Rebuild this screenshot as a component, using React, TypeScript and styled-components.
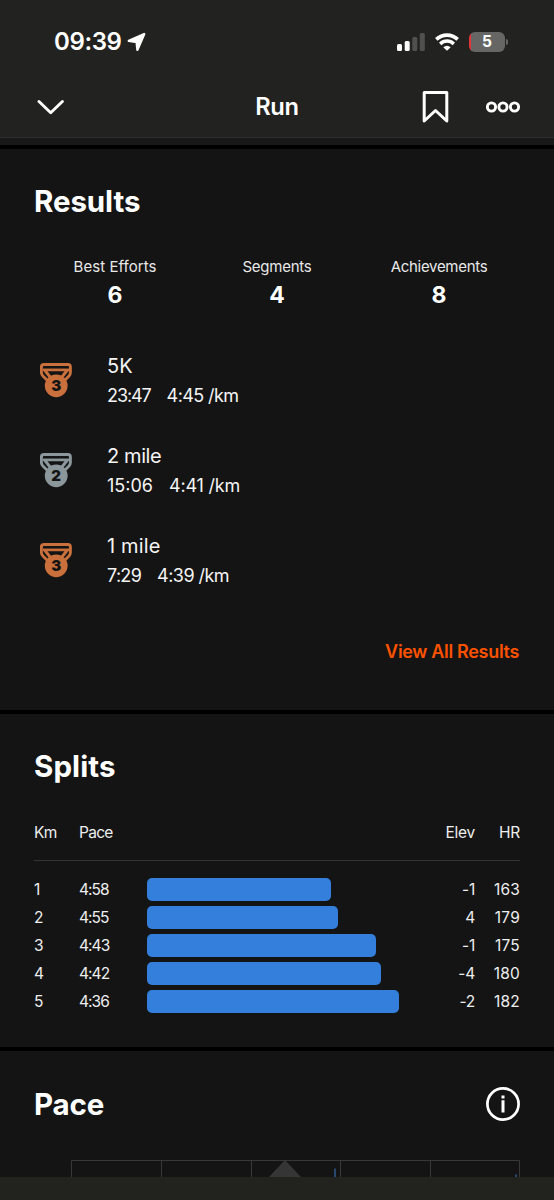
import React from "react";
import styled, { createGlobalStyle } from "styled-components";

const GlobalStyle = createGlobalStyle`
  * { box-sizing: border-box; }
  body { margin: 0; background: #000; }
`;

const Screen = styled.div`
  width: 554px;
  height: 1200px;
  overflow: hidden;
  display: flex;
  flex-direction: column;
  background: #000;
  color: #fff;
  font-family: Inter, "Liberation Sans", sans-serif;
`;

const Text = styled.span<{ $size: number; $weight?: number; $spacing?: number; $color?: string }>`
  display: block;
  white-space: nowrap;
  font-size: ${(p) => p.$size}px;
  font-weight: ${(p) => p.$weight ?? 400};
  letter-spacing: ${(p) => p.$spacing ?? 0}px;
  color: ${(p) => p.$color ?? "#fff"};
`;

const Header = styled.header`
  flex: none;
  height: 138px;
  background: #222220;
  border-bottom: 1px solid #2e2e2d;
`;

const StatusBar = styled.div`
  height: 76px;
  padding: 7px 46px 0 54px;
  display: flex;
  align-items: center;
  justify-content: space-between;
`;

const Cluster = styled.div<{ $gap: number }>`
  display: flex;
  align-items: center;
  gap: ${(p) => p.$gap}px;
`;

const Battery = styled.div`
  display: flex;
  align-items: center;
  gap: 1px;
`;

const BatteryBody = styled.div`
  width: 36px;
  height: 20px;
  border-radius: 6px;
  background: linear-gradient(90deg, #e5343a 0 2px, #666665 2px);
  display: flex;
  align-items: center;
  justify-content: center;
`;

const BatteryCap = styled.div`
  width: 2px;
  height: 6px;
  border-radius: 0 2px 2px 0;
  background: #666665;
`;

const NavBar = styled.div`
  height: 61px;
  padding: 0 34px 0 37px;
  display: grid;
  grid-template-columns: 1fr auto 1fr;
  align-items: center;
`;

const NavTitle = styled(Text)`
  padding-right: 3px;
`;

const NavActions = styled.div`
  display: flex;
  align-items: center;
  justify-content: flex-end;
  gap: 37px;
`;

const HeaderGap = styled.div`
  flex: none;
  height: 7px;
  background: #181818;
`;

const Section = styled.section<{ $height: number }>`
  flex: none;
  height: ${(p) => p.$height}px;
  margin-top: 4px;
  padding: 0 34px;
  background: #141414;
  overflow: hidden;
`;

const SectionHead = styled.div<{ $height: number }>`
  height: ${(p) => p.$height}px;
  display: flex;
  align-items: center;
  justify-content: space-between;
`;

const Stats = styled.div`
  display: grid;
  grid-template-columns: repeat(3, 1fr);
  height: 81px;
  margin-top: 2px;
  text-align: center;
`;

const Stat = styled.div`
  line-height: 23px;
`;

const StatValue = styled(Text)`
  line-height: 34px;
`;

const Effort = styled.div`
  height: 90px;
  display: grid;
  grid-template-columns: 73px 1fr;
  align-items: center;
`;

const MedalBox = styled.div`
  padding-left: 6px;
  height: 37px;
`;

const EffortText = styled.div`
  line-height: 30px;
`;

const ViewAll = styled.div`
  display: flex;
  justify-content: flex-end;
  line-height: 30px;
  margin-top: 31px;
  padding-right: 1px;
`;

const SplitRow = styled.div<{ $height: number }>`
  display: grid;
  grid-template-columns: 45px 68px 1fr 60px 45px;
  align-items: center;
  height: ${(p) => p.$height}px;
`;

const SplitHead = styled(SplitRow)`
  margin: -1px 0 14px;
  border-bottom: 1px solid #343434;
  padding-bottom: 13px;
`;

const RightCell = styled.div`
  display: flex;
  justify-content: flex-end;
`;

const Bar = styled.div`
  height: 23px;
  border-radius: 5px;
  background: #347fdc;
`;

const ChartBox = styled.div`
  padding-left: 37px;
  margin-top: 2px;
`;

const BottomBar = styled.footer`
  flex: none;
  height: 23px;
  background: #22221f;
`;

const Medal = ({ color, rank }: { color: string; rank: number }) => (
  <svg width="32" height="36" viewBox="0 0 32 36" fill="none">
    <path
      d="M4 1.5H28Q30.4 1.5 30.4 3.9V9.5Q30.4 11.6 29 13L24 18H8L2.9 13Q1.4 11.6 1.4 9.5V3.9Q1.4 1.5 4 1.5Z"
      stroke={color}
      strokeWidth="2.9"
      strokeLinejoin="round"
    />
    <path d="M3 6.9H29" stroke={color} strokeWidth="2.7" />
    <path d="M5 7.5L12 16.5M27 7.5L20 16.5" stroke={color} strokeWidth="3" />
    <circle cx="16.2" cy="22.8" r="11.4" fill={color} />
    <text
      x="16.2"
      y="28.2"
      textAnchor="middle"
      fontFamily="Inter, sans-serif"
      fontSize="15"
      fontWeight="900"
      fill="#141414"
    >
      {rank}
    </text>
  </svg>
);

const Signal = () => (
  <svg width="28" height="18" viewBox="0 0 28 18">
    <rect x="0" y="11" width="5" height="7" rx="1.5" fill="#fff" />
    <rect x="7.7" y="8" width="5" height="10" rx="1.5" fill="#fff" />
    <rect x="15.3" y="4" width="5" height="14" rx="1.5" fill="#50504f" />
    <rect x="22.8" y="0" width="5" height="18" rx="1.5" fill="#50504f" />
  </svg>
);

const Wifi = () => (
  <svg width="24" height="18" viewBox="0 0 24 18" fill="none" stroke="#fff">
    <path d="M1.3 6.4C7.3 .7 16.7 .7 22.7 6.4" strokeWidth="3.6" />
    <path d="M5.2 10.9C9.2 7.1 14.8 7.1 18.8 10.9" strokeWidth="3.4" />
    <path d="M12 17.8L8.3 14.2Q12 11.2 15.7 14.2Z" fill="#fff" stroke="none" />
  </svg>
);

const efforts = [
  { name: "5K", nameGap: 0, time: "23:47", timeGap: -1.1, pace: "4:45 /km", paceGap: -0.6, rank: 3, color: "#c9703c" },
  { name: "2 mile", nameGap: -0.4, time: "15:06", timeGap: 0, pace: "4:41 /km", paceGap: -0.2, rank: 2, color: "#8b979b" },
  { name: "1 mile", nameGap: 0.15, time: "7:29", timeGap: -0.7, pace: "4:39 /km", paceGap: -0.55, rank: 3, color: "#c9703c" },
];

const stats = [
  { label: "Best Efforts", spacing: 0.05, value: 6 },
  { label: "Segments", spacing: -0.25, value: 4 },
  { label: "Achievements", spacing: -0.3, value: 8 },
];

const splits = [
  { km: 1, pace: "4:58", bar: 184, elev: "-1", hr: 163 },
  { km: 2, pace: "4:55", bar: 191, elev: "4", hr: 179 },
  { km: 3, pace: "4:43", bar: 229, elev: "-1", hr: 175 },
  { km: 4, pace: "4:42", bar: 234, elev: "-4", hr: 180 },
  { km: 5, pace: "4:36", bar: 252, elev: "-2", hr: 182 },
];

const Cell = ({ children, spacing = -0.25 }: { children: React.ReactNode; spacing?: number }) => (
  <Text $size={15.5} $spacing={spacing} $color="#eee">
    {children}
  </Text>
);

export default function App() {
  return (
    <Screen>
      <GlobalStyle />
      <Header>
        <StatusBar>
          <Cluster $gap={6}>
            <Text $size={24} $weight={600} $spacing={-0.4}>
              09:39
            </Text>
            <svg width="19" height="20" viewBox="0 0 19 20">
              <path
                d="M17.2 2L1.8 8.9L9.6 10L10.4 17.8Z"
                fill="#fff"
                stroke="#fff"
                strokeWidth="2.4"
                strokeLinejoin="round"
              />
            </svg>
          </Cluster>
          <Cluster $gap={10}>
            <Signal />
            <Wifi />
            <Battery>
              <BatteryBody>
                <Text $size={15.5} $weight={700}>
                  5
                </Text>
              </BatteryBody>
              <BatteryCap />
            </Battery>
          </Cluster>
        </StatusBar>
        <NavBar>
          <svg width="28" height="16" viewBox="0 0 28 16" fill="none">
            <path d="M2 2.5L13.7 13.8L25.4 2.5" stroke="#fff" strokeWidth="2.9" strokeLinecap="round" strokeLinejoin="round" />
          </svg>
          <NavTitle $size={23.7} $weight={600} $spacing={-0.3}>
            Run
          </NavTitle>
          <NavActions>
            <svg width="27" height="32" viewBox="0 0 27 32" fill="none">
              <path d="M2.2 1.6H24.8V30L13.5 19.5L2.2 30Z" stroke="#fff" strokeWidth="3" strokeLinejoin="round" />
            </svg>
            <svg width="34" height="12" viewBox="0 0 34 12" fill="none" stroke="#fff" strokeWidth="2.9">
              <circle cx="5.5" cy="6" r="4.1" />
              <circle cx="17" cy="6" r="4.1" />
              <circle cx="28.5" cy="6" r="4.1" />
            </svg>
          </NavActions>
        </NavBar>
      </Header>
      <HeaderGap />

      <Section $height={561}>
        <SectionHead $height={104}>
          <Text $size={29.5} $weight={700} $spacing={-0.1}>
            Results
          </Text>
        </SectionHead>
        <Stats>
          {stats.map((s) => (
            <Stat key={s.label}>
              <Text $size={15} $spacing={s.spacing} $color="#e8e8e8">
                {s.label}
              </Text>
              <StatValue $size={23} $weight={700}>
                {s.value}
              </StatValue>
            </Stat>
          ))}
        </Stats>
        {efforts.map((e) => (
          <Effort key={e.name}>
            <MedalBox>
              <Medal color={e.color} rank={e.rank} />
            </MedalBox>
            <EffortText>
              <Text $size={20} $spacing={e.nameGap} $color="#f4f4f4">
                {e.name}
              </Text>
              <Cluster $gap={16}>
                <Text $size={18} $spacing={e.timeGap} $color="#f4f4f4">
                  {e.time}
                </Text>
                <Text $size={18} $spacing={e.paceGap} $color="#f4f4f4">
                  {e.pace}
                </Text>
              </Cluster>
            </EffortText>
          </Effort>
        ))}
        <ViewAll>
          <Text $size={18} $weight={600} $spacing={-0.32} $color="#fc5200">
            View All Results
          </Text>
        </ViewAll>
      </Section>

      <Section $height={333}>
        <SectionHead $height={104}>
          <Text $size={29.5} $weight={700} $spacing={0.1}>
            Splits
          </Text>
        </SectionHead>
        <SplitHead $height={44}>
          <Cell spacing={-0.7}>Km</Cell>
          <Cell spacing={-0.7}>Pace</Cell>
          <span />
          <RightCell>
            <Cell>Elev</Cell>
          </RightCell>
          <RightCell>
            <Cell>HR</Cell>
          </RightCell>
        </SplitHead>
        {splits.map((s) => (
          <SplitRow $height={28.2} key={s.km}>
            <Cell>{s.km}</Cell>
            <Cell spacing={-0.95}>{s.pace}</Cell>
            <Bar style={{ width: s.bar }} />
            <RightCell>
              <Cell>{s.elev}</Cell>
            </RightCell>
            <RightCell>
              <Cell spacing={0.2}>{s.hr}</Cell>
            </RightCell>
          </SplitRow>
        ))}
      </Section>

      <Section $height={126}>
        <SectionHead $height={106}>
          <Text $size={29.5} $weight={700} $spacing={-0.15}>
            Pace
          </Text>
          <svg width="34" height="34" viewBox="0 0 34 34" fill="none">
            <circle cx="17" cy="17" r="15.6" stroke="#fff" strokeWidth="2.7" />
            <path d="M17 13.3V25.5M17 8.5V11.5" stroke="#fff" strokeWidth="3" />
          </svg>
        </SectionHead>
        <ChartBox>
          <svg width="450" height="20" viewBox="0 0 450 20" fill="none">
            <path d="M214 1L230 18H198Z" fill="#353535" />
            <path d="M.5 20V1.5H448.5V20M90.5 1V20M180.5 1V20M269.5 1V20M359.5 1V20" stroke="#383838" />
            <path d="M264 9.5V20M445 15.5V20" stroke="#31598f" strokeWidth="1.5" />
          </svg>
        </ChartBox>
      </Section>
      <BottomBar />
    </Screen>
  );
}
